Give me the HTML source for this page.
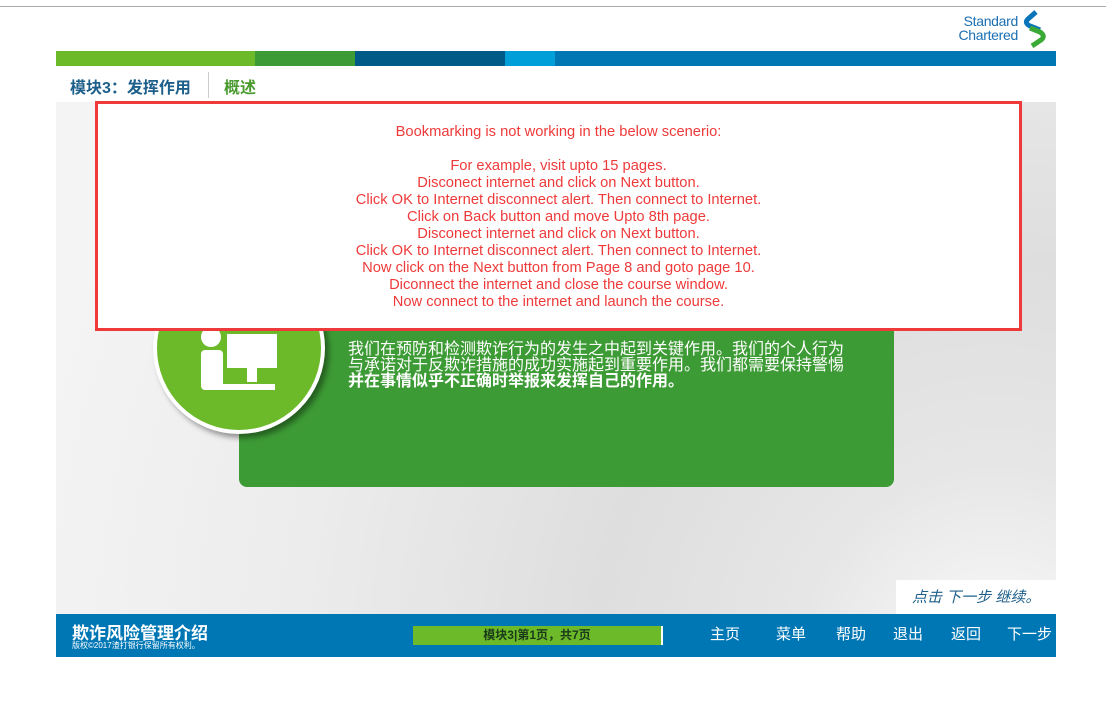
<!DOCTYPE html>
<html><head><meta charset="utf-8"><style>
*{margin:0;padding:0;box-sizing:border-box}
body{width:1106px;height:712px;background:#fff;position:relative;overflow:hidden;font-family:"Liberation Sans","Noto Sans CJK SC",sans-serif}
.abs{position:absolute}
</style></head><body>
<div class="abs" style="left:0;top:6px;width:1106px;height:1px;background:#aaa"></div>
<div class="abs" style="left:946px;top:14px;width:72px;font-size:14px;line-height:14px;color:#1a6fb3;text-align:right;letter-spacing:-0.3px">Standard<br>Chartered</div>
<svg class="abs" style="left:1022px;top:10px" width="26" height="38" viewBox="0 0 26 38">
<path d="M14 2 L6 9 Q2 13 8 16 L18 20" stroke="#0a74b9" stroke-width="5" fill="none"/>
<path d="M8 18 L18 22 Q24 26 19 30 L10 36" stroke="#3aa935" stroke-width="5" fill="none"/>
</svg>
<div class="abs" style="left:56px;top:51px;width:199px;height:15px;background:#6cb92a"></div>
<div class="abs" style="left:255px;top:51px;width:100px;height:15px;background:#3d9b35"></div>
<div class="abs" style="left:355px;top:51px;width:150px;height:15px;background:#005a87"></div>
<div class="abs" style="left:505px;top:51px;width:50px;height:15px;background:#009fda"></div>
<div class="abs" style="left:555px;top:51px;width:501px;height:15px;background:#0077b5"></div>
<div class="abs" style="left:70px;top:74px;font-size:16px;color:#1d5f8a;font-weight:bold">模块3：发挥作用</div>
<div class="abs" style="left:208px;top:72px;width:1px;height:26px;background:#ccc"></div>
<div class="abs" style="left:224px;top:74px;font-size:16px;color:#4a9a2e;font-weight:bold">概述</div>
<div class="abs" style="left:56px;top:102px;width:1000px;height:512px;background:radial-gradient(circle at 940px 560px,#fafafa 0,#e6e6e6 200px,#dedede 400px,#ececec 700px,#f4f4f4 1000px)"></div>
<div class="abs" style="left:239px;top:300px;width:655px;height:187px;background:#3d9b35;border-radius:8px"></div>
<div class="abs" style="left:153px;top:262px;width:172px;height:172px;border-radius:50%;background:#6cb92a;border:4px solid #fff;box-shadow:4px 4px 6px rgba(0,0,0,.4)"></div>
<svg class="abs" style="left:195px;top:320px" width="90" height="80"><circle cx="16" cy="17" r="10" fill="#fff"/><rect x="6" y="30" width="22" height="40" rx="4" fill="#fff"/><rect x="32" y="14" width="50" height="34" fill="#fff"/><rect x="52" y="48" width="10" height="14" fill="#fff"/><rect x="10" y="64" width="70" height="6" fill="#fff"/></svg>
<div class="abs" style="left:348px;top:342px;width:540px;font-size:16px;line-height:16px;color:#fff;white-space:nowrap">我们在预防和检测欺诈行为的发生之中起到关键作用。我们的个人行为<br>与承诺对于反欺诈措施的成功实施起到重要作用。我们都需要保持警惕<br><b>并在事情似乎不正确时举报来发挥自己的作用。</b></div>
<div class="abs" style="left:95px;top:101px;width:927px;height:230px;background:#fff;border:3px solid #ee3a3a;color:#ee3a3a;font-size:14.7px;line-height:17px;text-align:center;padding-top:20px">Bookmarking is not working in the below scenerio:<br><br>For example, visit upto 15 pages.<br>Disconect internet and click on Next button.<br>Click OK to Internet disconnect alert. Then connect to Internet.<br>Click on Back button and move Upto 8th page.<br>Disconect internet and click on Next button.<br>Click OK to Internet disconnect alert. Then connect to Internet.<br>Now click on the Next button from Page 8 and goto page 10.<br>Diconnect the internet and close the course window.<br>Now connect to the internet and launch the course.</div>
<div class="abs" style="left:896px;top:580px;width:160px;height:34px;background:#fff;font-size:15px;font-style:italic;color:#1d5f8a;padding:6px 0 0 16px">点击 下一步 继续。</div>
<div class="abs" style="left:56px;top:614px;width:1000px;height:43px;background:#0077b5"></div>
<div class="abs" style="left:72px;top:619px;font-size:17px;font-weight:bold;color:#fff">欺诈风险管理介绍</div>
<div class="abs" style="left:72px;top:640px;font-size:8px;color:#fff">版权©2017渣打银行保留所有权利。</div>
<div class="abs" style="left:413px;top:626px;width:248px;height:19px;background:#6cb92a;font-size:12px;font-weight:bold;color:#1a3a1a;text-align:center;line-height:19px">模块3|第1页，共7页</div>
<div class="abs" style="left:661px;top:626px;width:2px;height:19px;background:#fff"></div>
<div class="abs" style="left:710px;top:623px;font-size:15px;color:#fff">主页</div>
<div class="abs" style="left:776px;top:623px;font-size:15px;color:#fff">菜单</div>
<div class="abs" style="left:836px;top:623px;font-size:15px;color:#fff">帮助</div>
<div class="abs" style="left:893px;top:623px;font-size:15px;color:#fff">退出</div>
<div class="abs" style="left:951px;top:623px;font-size:15px;color:#fff">返回</div>
<div class="abs" style="left:1007px;top:623px;font-size:15px;color:#fff">下一步</div>
</body></html>
